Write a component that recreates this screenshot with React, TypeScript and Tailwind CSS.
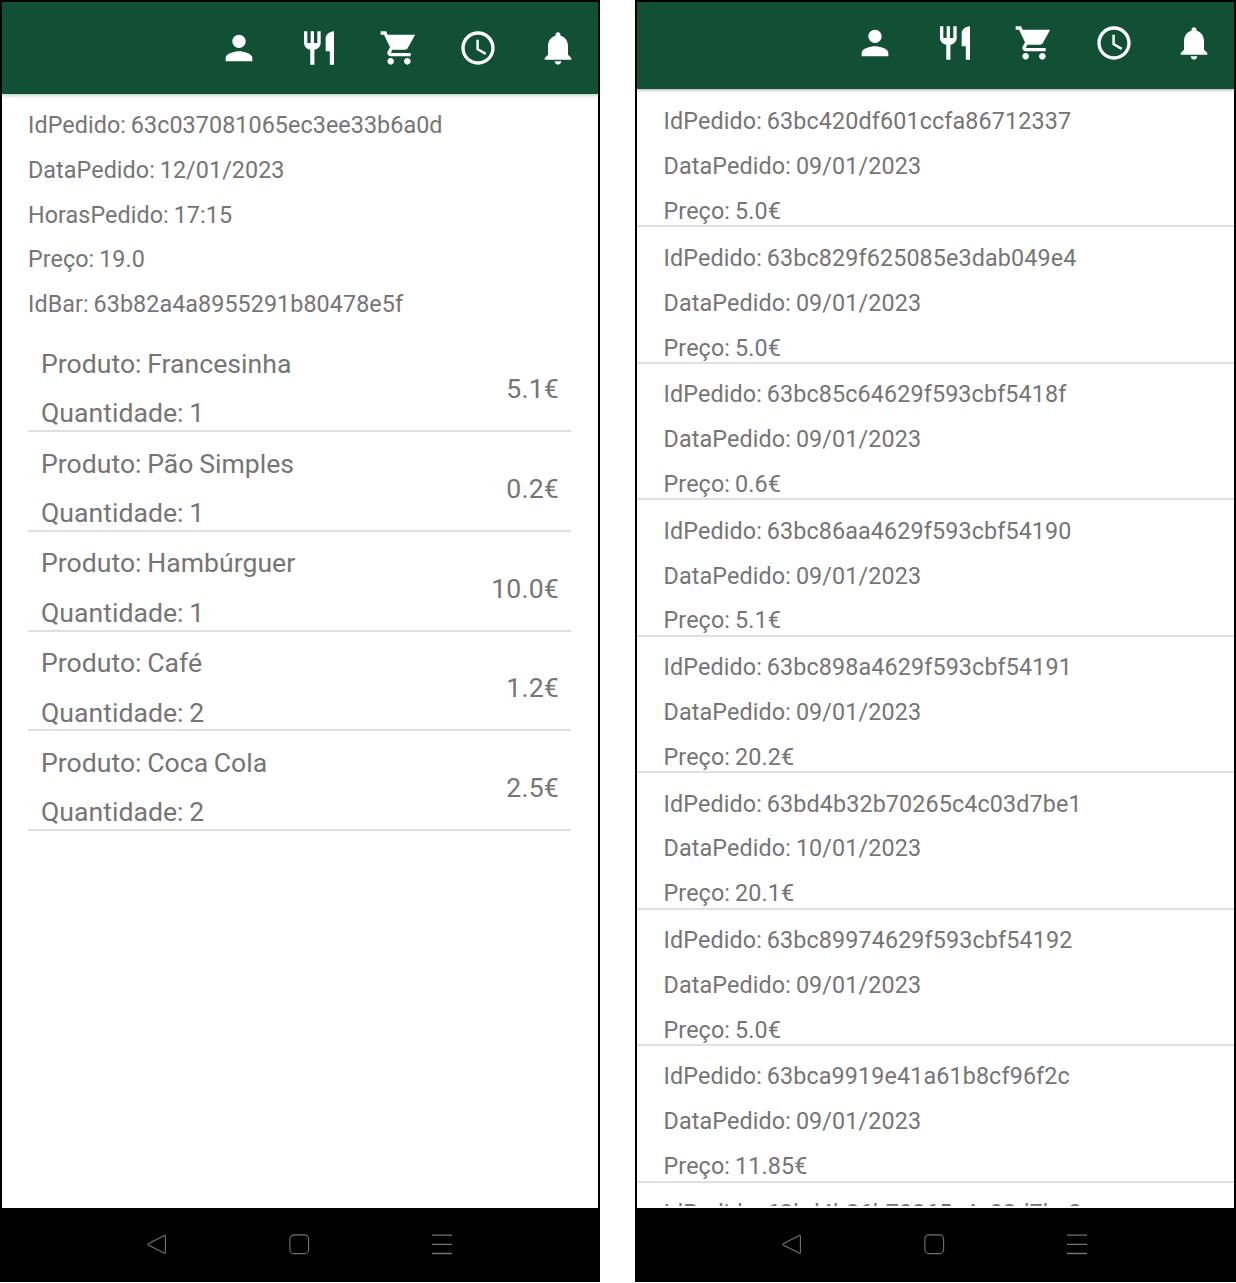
import React from "react";

const iconPaths = {
  person:
    "M12 12c2.21 0 4-1.79 4-4s-1.79-4-4-4-4 1.79-4 4 1.79 4 4 4zm0 2c-2.67 0-8 1.34-8 4v2h16v-2c0-2.66-5.33-4-8-4z",
  restaurant:
    "M11 9H9V2H7v7H5V2H3v7c0 2.12 1.66 3.84 3.75 3.97V22h2.5v-9.03C11.34 12.84 13 11.12 13 9V2h-2v7zm5-3v8h2.5v8H21V2c-2.76 0-5 2.24-5 4z",
  cart: "M7 18c-1.1 0-1.99.9-1.99 2S5.9 22 7 22s2-.9 2-2-.9-2-2-2zM1 2v2h2l3.6 7.59-1.35 2.45c-.16.28-.25.61-.25.96 0 1.1.9 2 2 2h12v-2H7.42c-.14 0-.25-.11-.25-.25l.03-.12.9-1.63h7.45c.75 0 1.41-.41 1.75-1.03L21.7 4H5.21l-.94-2H1zm16 16c-1.1 0-1.99.9-1.99 2s.89 2 1.99 2 2-.9 2-2-.9-2-2-2z",
  clock:
    "M11.99 2C6.47 2 2 6.48 2 12s4.47 10 9.99 10C17.52 22 22 17.52 22 12S17.52 2 11.99 2zM12 20c-4.42 0-8-3.58-8-8s3.58-8 8-8 8 3.58 8 8-3.58 8-8 8zm.5-13H11v6l5.25 3.15.75-1.23-4.5-2.67z",
  bell: "M12 22c1.1 0 2-.9 2-2h-4c0 1.1.89 2 2 2zm6-6v-5c0-3.07-1.64-5.64-4.5-6.32V4c0-.83-.67-1.5-1.5-1.5s-1.5.67-1.5 1.5v.68C7.63 5.36 6 7.92 6 11v5l-2 2v1h16v-1l-2-2z",
};

function ToolbarIcons() {
  return (
    <div className="flex h-full items-center justify-end">
      {Object.entries(iconPaths).map(([name, d]) => (
        <button key={name} aria-label={name} className="flex w-[79.7px] justify-center">
          <svg viewBox="0 0 24 24" className="size-10 fill-white">
            <path d={d} />
          </svg>
        </button>
      ))}
    </div>
  );
}

function NavBar() {
  return (
    <nav className="flex h-[74px] shrink-0 items-center bg-black pb-[2px] pl-[142px] text-[#747474]">
      <svg viewBox="0 0 24 24" className="size-6" fill="none" stroke="currentColor" strokeWidth="1.1">
        <path d="M20.4 3.5 4.6 11.4Q3 12.3 4.6 13.2L20 21.1Q21.4 21.7 21.4 20.2V4.2Q21.4 3 20.4 3.5Z" />
      </svg>
      <svg viewBox="0 0 24 24" className="ml-[119px] size-6" fill="none" stroke="currentColor" strokeWidth="1.1">
        <rect x="2.9" y="2.9" width="18.7" height="18.7" rx="4.2" />
      </svg>
      <svg viewBox="0 0 24 24" className="ml-[118px] size-6" fill="none" stroke="currentColor" strokeWidth="1.3">
        <path d="M3 3.1h20M3 12.3h20M3 21.5h20" />
      </svg>
    </nav>
  );
}

const details = [
  "IdPedido: 63c037081065ec3ee33b6a0d",
  "DataPedido: 12/01/2023",
  "HorasPedido: 17:15",
  "Preço: 19.0",
  "IdBar: 63b82a4a8955291b80478e5f",
];

const products = [
  { name: "Francesinha", qty: 1, price: "5.1€" },
  { name: "Pão Simples", qty: 1, price: "0.2€" },
  { name: "Hambúrguer", qty: 1, price: "10.0€" },
  { name: "Café", qty: 2, price: "1.2€" },
  { name: "Coca Cola", qty: 2, price: "2.5€" },
];

const orders = [
  { id: "63bc420df601ccfa86712337", date: "09/01/2023", price: "5.0€" },
  { id: "63bc829f625085e3dab049e4", date: "09/01/2023", price: "5.0€" },
  { id: "63bc85c64629f593cbf5418f", date: "09/01/2023", price: "0.6€" },
  { id: "63bc86aa4629f593cbf54190", date: "09/01/2023", price: "5.1€" },
  { id: "63bc898a4629f593cbf54191", date: "09/01/2023", price: "20.2€" },
  { id: "63bd4b32b70265c4c03d7be1", date: "10/01/2023", price: "20.1€" },
  { id: "63bc89974629f593cbf54192", date: "09/01/2023", price: "5.0€" },
  { id: "63bca9919e41a61b8cf96f2c", date: "09/01/2023", price: "11.85€" },
];

const nextOrderId = "63bd4b36b70265c4c03d7be2";

function OrderDetailScreen() {
  return (
    <section className="flex h-[1282px] w-[600px] flex-col border-2 border-b-0 border-black bg-white">
      <header className="h-[92px] shrink-0 bg-[#115034] shadow-[0_1px_4px_rgba(17,81,53,0.35)]">
        <ToolbarIcons />
      </header>
      <main className="min-h-0 flex-1 overflow-hidden px-[26px] pt-[9px]">
        <div className="text-[23.3px] leading-[44.8px] tracking-[0.08px] [word-spacing:-1px]">
          {details.map((line) => (
            <p key={line}>{line}</p>
          ))}
        </div>
        <ul className="mt-[5.3px] mr-px text-[26.6px] tracking-[0.02px] [word-spacing:-1px]">
          {products.map((p) => (
            <li
              key={p.name}
              className="flex h-[99.8px] items-center justify-between border-b-2 border-[#e0e0e0] pr-[12px] pl-[13px] pt-[14px]"
            >
              <div className="leading-[49.3px]">
                <p>Produto: {p.name}</p>
                <p>Quantidade: {p.qty}</p>
              </div>
              <span className="pt-[1.5px] tracking-[0.2px]">{p.price}</span>
            </li>
          ))}
        </ul>
      </main>
      <NavBar />
    </section>
  );
}

function OrderHistoryScreen() {
  return (
    <section className="flex h-[1282px] w-[601px] flex-col border-2 border-b-0 border-black bg-white">
      <header className="h-[87px] shrink-0 bg-[#115034] pb-[5px] shadow-[0_1px_3px_rgba(0,0,0,0.35)]">
        <ToolbarIcons />
      </header>
      <main className="min-h-0 flex-1 overflow-hidden pt-[2px] pb-[2px]">
        <ul className="h-full overflow-hidden text-[23.3px] leading-[27px] tracking-[0.13px] [word-spacing:-1px]">
          {orders.map((o) => (
            <li key={o.id} className="h-[136.45px] border-b-2 border-[#e0e0e0] pt-[17.4px] pl-[27px]">
              <p>IdPedido: {o.id}</p>
              <p className="mt-[17.9px]">DataPedido: {o.date}</p>
              <p className="mt-[17.9px]">Preço: {o.price}</p>
            </li>
          ))}
          <li className="pt-[17.4px] pl-[27px]">IdPedido: {nextOrderId}</li>
        </ul>
      </main>
      <NavBar />
    </section>
  );
}

export default function App() {
  return (
    <div className="flex h-[1283px] w-[1236px] gap-[34.5px] overflow-hidden bg-white font-['Roboto',sans-serif] text-[#757575]">
      <OrderDetailScreen />
      <OrderHistoryScreen />
    </div>
  );
}
